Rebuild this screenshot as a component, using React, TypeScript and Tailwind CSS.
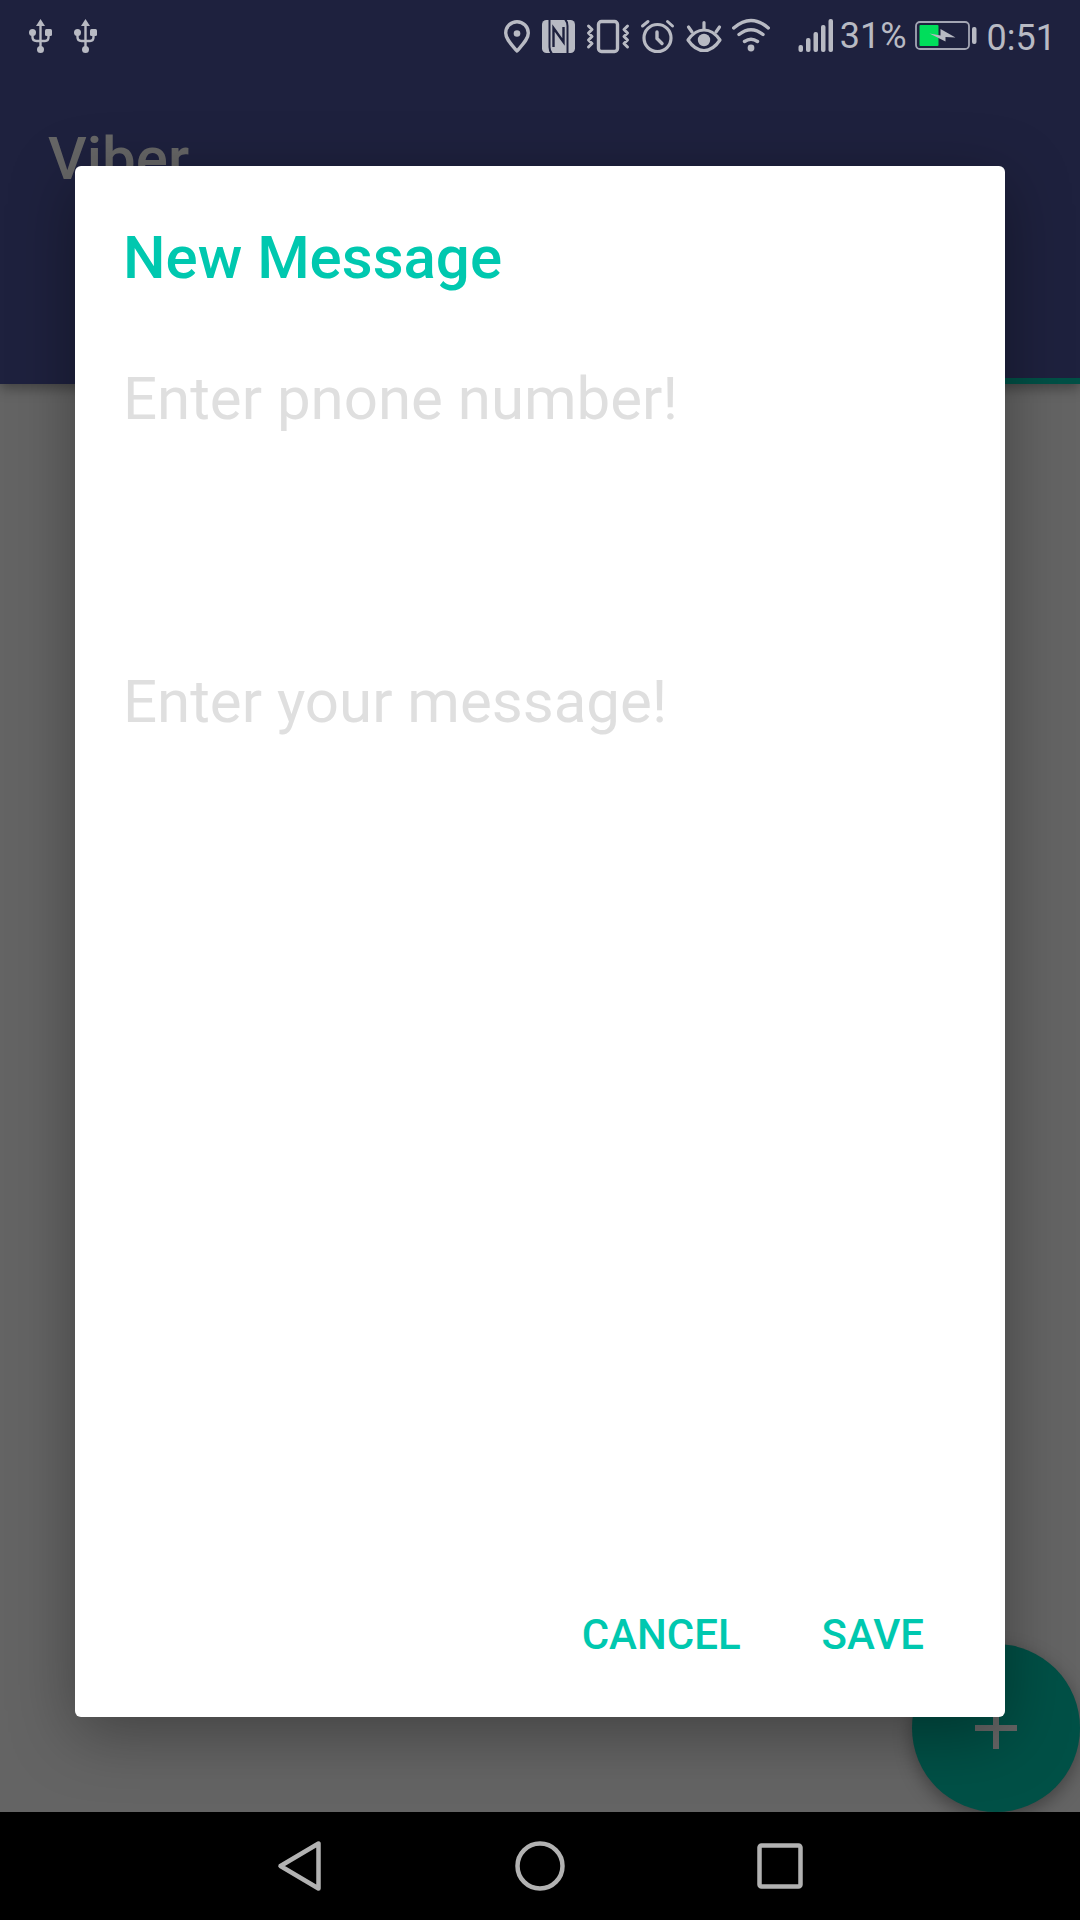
import React from 'react';

const ICON = 'shrink-0 block';

function Usb() {
  return (
    <svg className={ICON} width="25" height="36" viewBox="0 0 25 36" fill="currentColor">
      <path d="M12.500 1 17 8H8Z" />
      <path d="M12.500 6V30M4.500 14V19Q4.500 23 8.500 23H17Q20.500 23 20.500 19V14" fill="none" stroke="currentColor" strokeWidth="2.400" />
      <circle cx="4.500" cy="14.500" r="3.500" />
      <rect x="17" y="11" width="7" height="7" rx="1.500" />
      <circle cx="12.500" cy="31.500" r="3.500" />
    </svg>
  );
}

function Pin() {
  return (
    <svg className={ICON} width="29" height="36" viewBox="0 0 29 36">
      <path d="M14 33C8 26 2.700 21 2.700 15a11.300 11.300 0 0 1 22.600 0C25.300 21 20 26 14 33Z" fill="none" stroke="currentColor" strokeWidth="3.400" strokeLinejoin="round" />
      <circle cx="14" cy="15.500" r="3.300" fill="currentColor" />
    </svg>
  );
}

function Nfc() {
  return (
    <svg className={ICON} width="34" height="36" viewBox="0 0 34 36">
      <rect x="0" y="2" width="33" height="33" rx="4.500" fill="currentColor" />
      <g fill="none" stroke="#1e213e" strokeWidth="2">
        <path d="M7.500 2V29Q7.500 33 10 36" />
        <path d="M25.500 35V8Q25.500 4 23 1" />
        <path d="M11.500 29V10L21.500 24V9" strokeWidth="2.400" />
      </g>
    </svg>
  );
}

function Vibrate() {
  return (
    <svg className={ICON} width="44" height="36" viewBox="0 0 44 36" fill="none" stroke="currentColor">
      <rect x="12.500" y="3.500" width="19" height="30" rx="3" strokeWidth="3.400" />
      <path d="M2.500 8 6 11.500 2.500 15 6 18.500 2.500 22 6 25.500 2.500 29M41.500 8 38 11.500 41.500 15 38 18.500 41.500 22 38 25.500 41.500 29" strokeWidth="3" strokeLinecap="round" strokeLinejoin="round" />
    </svg>
  );
}

function Alarm() {
  return (
    <svg className={ICON} width="36" height="36" viewBox="0 0 36 36" fill="none" stroke="currentColor" strokeLinecap="round" strokeLinejoin="round">
      <circle cx="17.500" cy="20" r="13.500" strokeWidth="3.200" />
      <path d="M17 14V20.500L22 25.500" strokeWidth="3.400" />
      <path d="M2.500 8 8 3.500M32.500 8 27.500 3.500" strokeWidth="3" />
    </svg>
  );
}

function Eye() {
  return (
    <svg className={ICON} width="36" height="36" viewBox="0 0 36 36" fill="none" stroke="currentColor" strokeLinecap="round" strokeLinejoin="round">
      <path d="M2 22Q9 12 18 12T34 22Q27 32.500 18 32.500T2 22Z" strokeWidth="3.200" />
      <circle cx="18" cy="22" r="6.200" fill="currentColor" stroke="none" />
      <path d="M18 11V4.500M6 14 2.500 9M30 14 33.500 9" strokeWidth="3.200" />
    </svg>
  );
}

function Wifi() {
  return (
    <svg className={ICON} width="40" height="36" viewBox="0 0 40 36" fill="none" stroke="currentColor" strokeWidth="3.400" strokeLinecap="round">
      <path d="M1.700 10Q19 -5 36.300 10M7 16.500Q19 7 31 16.500M12.500 23.500Q19 19 25.500 23.500" />
      <circle cx="19" cy="30" r="3.400" fill="currentColor" stroke="none" />
    </svg>
  );
}

function Signal() {
  return (
    <svg className={ICON} width="36" height="36" viewBox="0 0 36 36" fill="currentColor">
      <rect x="0.500" y="27" width="4.500" height="7" rx="2" />
      <rect x="8" y="20" width="4.500" height="14" rx="2" />
      <rect x="15.500" y="14" width="4.500" height="20" rx="2" />
      <rect x="23" y="7" width="4.500" height="27" rx="2" />
      <rect x="30.500" y="1" width="4.500" height="33" rx="2" />
    </svg>
  );
}

function Battery() {
  return (
    <svg className={ICON} width="62" height="36" viewBox="0 0 62 36">
      <rect x="1" y="4" width="53" height="27" rx="4" fill="none" stroke="#a3a5b3" strokeWidth="1.800" />
      <rect x="4.500" y="7" width="19" height="21" rx="1" fill="#00de5b" />
      <rect x="57" y="9" width="4.500" height="17" rx="2" fill="currentColor" />
      <path d="M14.500 15.500 25.500 17.500V11L40.500 19.500 30.500 19V23.500Z" fill="currentColor" />
    </svg>
  );
}

function StatusBar() {
  return (
    <div className="flex h-[72px] items-start justify-between bg-[#1e213e] pt-[18px] pr-6 pl-7 text-[#b8bac3]">
      <div className="flex gap-5">
        <Usb />
        <Usb />
      </div>
      <div className="flex items-start">
        <div className="flex gap-2.5">
          <Pin />
          <Nfc />
          <Vibrate />
          <Alarm />
          <Eye />
          <Wifi />
        </div>
        <div className="ml-[26px] flex gap-1.5">
          <Signal />
          <span className="text-[36px] leading-[36px]">31%</span>
        </div>
        <div className="ml-2 flex gap-2.5">
          <Battery />
          <time className="text-[36px] leading-[40px]">0:51</time>
        </div>
      </div>
    </div>
  );
}

function NavBar() {
  return (
    <nav className="flex h-[108px] shrink-0 items-center justify-center bg-black text-[#b2b2b2]">
      <button aria-label="Back" className="flex h-full w-60 items-center justify-center">
        <svg width="52" height="52" viewBox="0 0 52 52" fill="none" stroke="currentColor" strokeWidth="4.500" strokeLinejoin="round">
          <path d="M44.500 3.500V48.500L6.500 26Z" />
        </svg>
      </button>
      <button aria-label="Home" className="flex h-full w-60 items-center justify-center">
        <svg width="52" height="52" viewBox="0 0 52 52" fill="none" stroke="currentColor" strokeWidth="4.500">
          <circle cx="26" cy="26" r="22.500" />
        </svg>
      </button>
      <button aria-label="Recent apps" className="flex h-full w-60 items-center justify-center">
        <svg width="52" height="52" viewBox="0 0 52 52" fill="none" stroke="currentColor" strokeWidth="4.500">
          <rect x="5.500" y="5.500" width="41" height="41" rx="2" />
        </svg>
      </button>
    </nav>
  );
}

function MessageDialog() {
  return (
    <div className="absolute inset-x-0 top-[72px] bottom-[108px] flex px-[75px] pt-[94px] pb-[95px]">
      <form
        role="dialog"
        aria-labelledby="dialog-title"
        onSubmit={(e) => e.preventDefault()}
        className="flex flex-1 flex-col rounded-md bg-white px-12 pt-14 pb-[46px] shadow-[0_16px_64px_rgba(0,0,0,0.35)]"
      >
        <h2 id="dialog-title" className="text-[60px] leading-[72px] font-medium text-[#00c8af]">
          New Message
        </h2>
        <input
          type="tel"
          aria-label="Phone number"
          placeholder="Enter pnone number!"
          className="mt-[69px] h-[72px] w-full text-[60px] leading-[72px] outline-none placeholder:text-[#dfdfdf]"
        />
        <textarea
          aria-label="Message"
          placeholder="Enter your message!"
          className="mt-[231px] w-full flex-1 resize-none text-[60px] leading-[72px] outline-none placeholder:text-[#dfdfdf]"
        />
        <div className="flex justify-end gap-[33px] text-[42px] leading-[72px] font-medium text-[#00c8af]">
          <button type="button" className="px-6">CANCEL</button>
          <button type="submit" className="pr-[33px] pl-6">SAVE</button>
        </div>
      </form>
    </div>
  );
}

export default function App() {
  return (
    <div className="relative flex min-h-screen flex-col bg-[#646464] font-['Roboto',sans-serif]">
      <header className="relative flex h-[384px] flex-col bg-[#1e213e] shadow-[0_4px_12px_rgba(0,0,0,0.35)]">
        <StatusBar />
        <h1 className="flex-1 px-12 pt-[51px] text-[60px] leading-[72px] font-medium text-[#666666]">Viber</h1>
        <div className="grid grid-cols-3">
          <span className="col-start-3 h-1.5 bg-[#005046]" />
        </div>
      </header>
      <main className="flex flex-1 items-end justify-end overflow-hidden">
        <button
          aria-label="New message"
          className="flex size-[168px] items-center justify-center rounded-full bg-[#005046] text-[#666666] shadow-[0_6px_18px_rgba(0,0,0,0.35)]"
        >
          <svg width="42" height="42" viewBox="0 0 42 42" fill="currentColor">
            <path d="M18 0h6v18h18v6H24v18h-6V24H0v-6h18Z" />
          </svg>
        </button>
      </main>
      <NavBar />
      <MessageDialog />
    </div>
  );
}
